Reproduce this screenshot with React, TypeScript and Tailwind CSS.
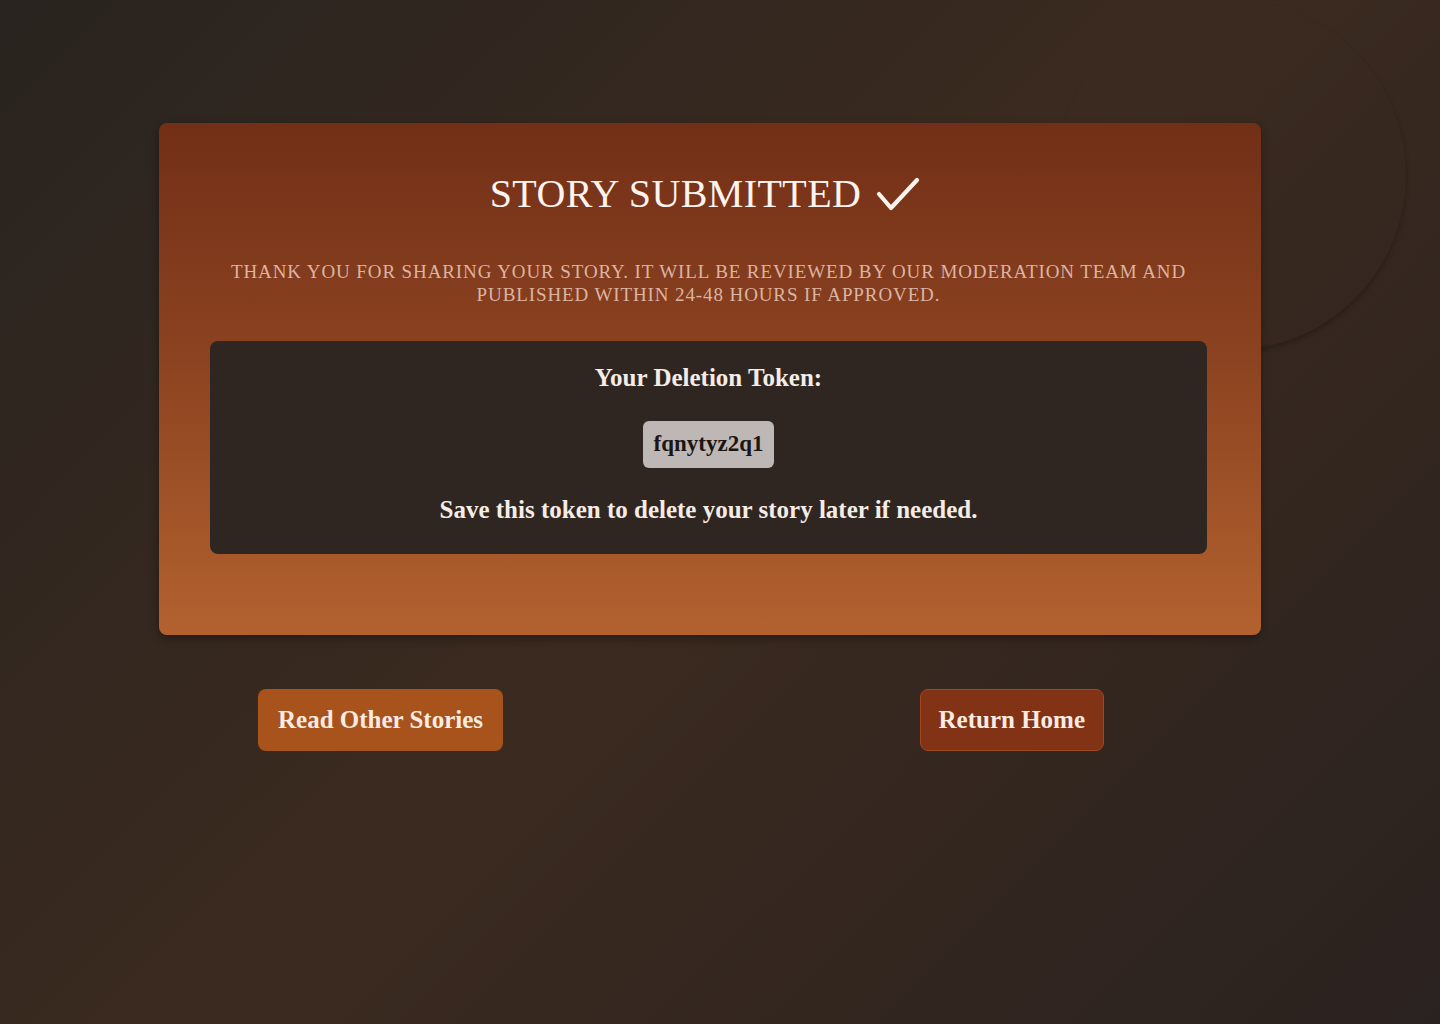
import React from 'react';

const Check = () => (
    <svg width="46" height="38" viewBox="0 0 46 38" fill="none" stroke="#fbf3ee" strokeWidth="4.2" strokeLinecap="round" strokeLinejoin="round">
        <path d="M4 19 16 33 42 5" />
    </svg>
);

export default function App() {
    return (
        <div className="relative min-h-screen w-full overflow-hidden bg-[linear-gradient(135deg,#29241f_0%,#3b2a1f_50%,#2a2220_100%)] font-['Liberation_Serif',serif]">
            {/* faint decorative circle behind the card */}
            <div className="absolute left-[1056px] top-[0px] w-[350px] h-[350px] rounded-full bg-transparent shadow-[1px_3px_4px_rgba(0,0,0,0.2)]" />

            <div className="relative pt-[123px] flex flex-col items-start">
                <div className="ml-[159px] w-[1102px] rounded-lg bg-[linear-gradient(180deg,#722f17_0%,#8b4220_45%,#b3622f_100%)] shadow-[0_4px_10px_rgba(0,0,0,0.3)] pl-[51px] pr-[54px] pt-[48px] pb-[81px]">
                    <h1 className="flex items-center justify-center gap-[14px] h-[46px] text-[40px] leading-none text-[#fbf3ee] uppercase tracking-[0.01em] pr-[6px]">
                        <span>Story Submitted</span>
                        <Check />
                    </h1>
                    <p className="mt-[43px] mx-auto max-w-[975px] text-center text-[19px] leading-[23px] uppercase text-[#dcb4a3] tracking-[0.047em]">
                        Thank you for sharing your story. It will be reviewed by our moderation team and published within 24-48 hours if approved.
                    </p>
                    <div className="mt-[35px] rounded-lg bg-[#2f2622] flex flex-col items-center pt-[23px] pb-[29px]">
                        <div className="text-[25px] leading-[28px] font-bold text-[#f5ece6]">Your Deletion Token:</div>
                        <div className="mt-[29px] rounded-md bg-[#bdb8b5] px-[11px] h-[47px] flex items-center text-[23px] text-[#1c1512] font-bold">fqnytyz2q1</div>
                        <div className="mt-[27px] text-[25px] leading-[30px] font-bold text-[#f5ece6]">Save this token to delete your story later if needed.</div>
                    </div>
                </div>

                <div className="mt-[54px] ml-[258px] w-[846px] flex justify-between items-center">
                    <button className="h-[62px] px-[20px] rounded-lg bg-[#a8521c] text-[25px] font-bold text-[#f7ebe3]">Read Other Stories</button>
                    <button className="h-[62px] px-[18px] rounded-lg bg-[#823215] border border-[#a24a1f] text-[25px] font-bold text-[#f7ebe3]">Return Home</button>
                </div>
            </div>
        </div>
    );
}
